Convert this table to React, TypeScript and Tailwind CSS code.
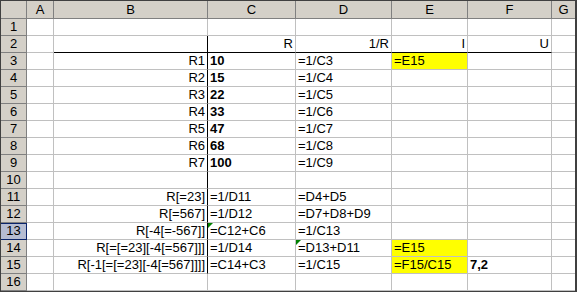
import React from 'react';

type Cell = {
  t?: string;
  r?: boolean; // right aligned
  b?: boolean; // bold
  y?: boolean; // yellow fill
  tri?: boolean; // green error marker
};

const cols = ['A', 'B', 'C', 'D', 'E', 'F', 'G'];

const rows: Record<number, Record<string, Cell>> = {
  2: { C: { t: 'R', r: true }, D: { t: '1/R', r: true }, E: { t: 'I', r: true }, F: { t: 'U', r: true } },
  3: { B: { t: 'R1', r: true }, C: { t: '10', b: true }, D: { t: '=1/C3' }, E: { t: '=E15', y: true } },
  4: { B: { t: 'R2', r: true }, C: { t: '15', b: true }, D: { t: '=1/C4' } },
  5: { B: { t: 'R3', r: true }, C: { t: '22', b: true }, D: { t: '=1/C5' } },
  6: { B: { t: 'R4', r: true }, C: { t: '33', b: true }, D: { t: '=1/C6' } },
  7: { B: { t: 'R5', r: true }, C: { t: '47', b: true }, D: { t: '=1/C7' } },
  8: { B: { t: 'R6', r: true }, C: { t: '68', b: true }, D: { t: '=1/C8' } },
  9: { B: { t: 'R7', r: true }, C: { t: '100', b: true }, D: { t: '=1/C9' } },
  11: { B: { t: 'R[=23]', r: true }, C: { t: '=1/D11' }, D: { t: '=D4+D5' } },
  12: { B: { t: 'R[=567]', r: true }, C: { t: '=1/D12' }, D: { t: '=D7+D8+D9' } },
  13: { B: { t: 'R[-4[=-567]]', r: true }, C: { t: '=C12+C6', tri: true }, D: { t: '=1/C13' } },
  14: { B: { t: 'R[=[=23][-4[=567]]]', r: true }, C: { t: '=1/D14' }, D: { t: '=D13+D11', tri: true }, E: { t: '=E15', y: true } },
  15: {
    B: { t: 'R[-1[=[=23][-4[=567]]]]', r: true },
    C: { t: '=C14+C3' },
    D: { t: '=1/C15' },
    E: { t: '=F15/C15', y: true },
    F: { t: '7,2', b: true },
  },
};

function cellClass(row: number, col: string) {
  const blackBottom = row === 2 && ['B', 'C', 'D', 'E', 'F'].includes(col);
  const blackRight = col === 'B' && row >= 2 && row <= 15;
  const noRight = col === 'G';
  return [
    'relative flex items-center overflow-visible whitespace-nowrap px-[2px] leading-[16px]',
    blackBottom ? 'border-b border-b-black' : 'border-b border-b-[#c0c0c0]',
    noRight ? '' : blackRight ? 'border-r border-r-black' : 'border-r border-r-[#c0c0c0]',
  ].join(' ');
}

const App = () => {
  return (
    <div className="w-[577px] h-[292px] bg-white font-['Liberation_Sans',Arial,sans-serif] text-[13px] text-black">
      <div className="grid grid-cols-[26px_27px_154px_88px_96px_76px_84px_23px] grid-rows-[18px_repeat(16,17px)] border-t border-l border-b border-r-2 border-[#404040]">
        {/* header row */}
        <div className="bg-[#d4d0c8] border-r border-b border-[#808080]" />
        {cols.map((c) => (
          <div
            key={c}
            className={
              c === 'G'
                ? 'bg-[#d4d0c8] border-b border-[#808080] flex items-center justify-center leading-[16px]'
                : 'bg-[#d4d0c8] border-r border-b border-[#808080] flex items-center justify-center leading-[16px]'
            }
          >
            {c}
          </div>
        ))}

        {Array.from({ length: 16 }, (_, i) => i + 1).map((row) => (
          <React.Fragment key={row}>
            <div
              className={
                row === 13
                  ? 'bg-[#b6bdd2] border-r border-b border-[#0a246a] shadow-[inset_0_1px_0_#0a246a] flex items-center justify-center leading-[16px]'
                  : 'bg-[#d4d0c8] border-r border-b border-[#808080] flex items-center justify-center leading-[16px]'
              }
            >
              {row}
            </div>
            {cols.map((col) => {
              const cell = rows[row]?.[col];
              return (
                <div key={col} className={`${cellClass(row, col)} ${cell?.y ? 'bg-[#ffff00]' : 'bg-white'} ${cell?.r ? 'justify-end' : 'justify-start'}`}>
                  {cell?.tri && (
                    <svg className="absolute left-0 top-0" width="5" height="5" viewBox="0 0 5 5">
                      <polygon points="0,0 5,0 0,5" fill="#008000" />
                    </svg>
                  )}
                  <span className={cell?.b ? 'font-bold' : ''}>{cell?.t}</span>
                </div>
              );
            })}
          </React.Fragment>
        ))}
      </div>
    </div>
  );
};

export default App;
